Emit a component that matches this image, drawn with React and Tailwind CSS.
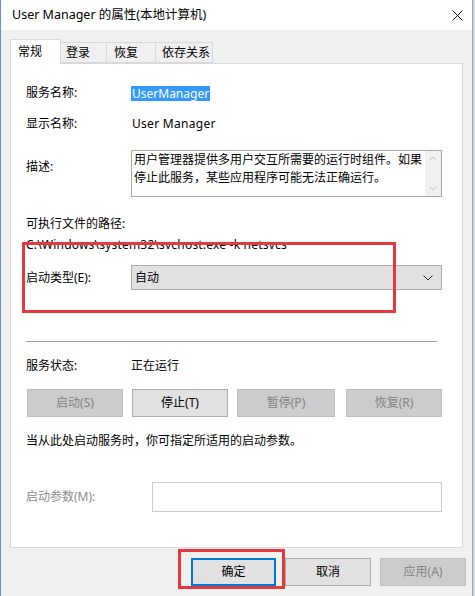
import React from "react";

const font = { fontFamily: '"Noto Sans", "Noto Sans CJK SC", sans-serif' };

function Btn({ children, disabled, primary, className = "" }) {
  return (
    <div
      className={
        "flex h-[28px] items-center justify-center text-[12px] " +
        (primary
          ? "border-2 border-[#0078d7] bg-[#e1e1e1] text-black "
          : disabled
          ? "border border-[#bfbfbf] bg-[#cccccc] text-[#838383] "
          : "border border-[#adadad] bg-[#e1e1e1] text-black ") +
        className
      }
    >
      {children}
    </div>
  );
}

function Row({ label, children, className = "" }) {
  return (
    <div className={"flex items-center " + className}>
      <div className="w-[105px] shrink-0">{label}</div>
      {children}
    </div>
  );
}

export default function App() {
  return (
    <div
      className="relative flex h-[596px] w-[475px] overflow-hidden bg-[#c8d5e2] text-[12px] text-black"
      style={font}
    >
      <div className="flex h-full w-[473px] flex-col border-l border-r border-l-[#6a93bd] border-r-[#a9a9a9] bg-[#f0f0f0]">
        {/* title bar */}
        <div className="flex h-[30px] shrink-0 items-center justify-between bg-white pl-[11px] pr-[8px]">
          <span className="text-[12.5px]">User Manager 的属性(本地计算机)</span>
          <svg width="11" height="11" viewBox="0 0 11 11" className="mr-[1px]">
            <path d="M0.5 0.5L10.5 10.5M10.5 0.5L0.5 10.5" stroke="#111" strokeWidth="1" />
          </svg>
        </div>

        <div className="flex flex-1 flex-col px-[9px]">
          {/* tabs */}
          <div className="mt-[9px] flex h-[24px] items-end">
            <div className="relative z-10 -mb-px flex h-[25px] w-[51px] items-center border border-b-0 border-[#d9d9d9] bg-white pl-[7px]">
              常规
            </div>
            <div className="flex h-[21px] w-[46px] items-center border-y border-r border-[#d9d9d9] bg-[#f0f0f0] pl-[5px]">
              登录
            </div>
            <div className="flex h-[21px] w-[49px] items-center border-y border-r border-[#d9d9d9] bg-[#f0f0f0] pl-[7px]">
              恢复
            </div>
            <div className="flex h-[21px] w-[57px] items-center border-y border-r border-[#d9d9d9] bg-[#f0f0f0] pl-[6px]">
              依存关系
            </div>
          </div>

          {/* panel */}
          <div className="flex h-[485px] flex-col border border-[#d9d9d9] bg-white pl-[15px] pr-[20px]">
            <Row label="服务名称:" className="mt-[19px] h-[20px]">
              <span className="bg-[#3399ff] px-[1px] leading-[15px] text-white">UserManager</span>
            </Row>
            <Row label="显示名称:" className="mt-[11px] h-[20px]">
              <span className="pl-[1px] tracking-[0.3px]">User Manager</span>
            </Row>

            <div className="mt-[16px] flex">
              <div className="w-[105px] shrink-0 pt-[8px]">描述:</div>
              <div className="flex h-[47px] flex-1 border border-[#a9a9a9]">
                <div className="flex-1 pl-[2px] leading-[18px]">
                  用户管理器提供多用户交互所需要的运行时组件。如果停止此服务，某些应用程序可能无法正确运行。
                </div>
                <div className="flex w-[16px] flex-col items-center justify-between bg-[#f0f0f0] py-[5px]">
                  <svg width="8" height="5" viewBox="0 0 8 5">
                    <path d="M0.5 4.5L4 1L7.5 4.5" fill="none" stroke="#c2c2c2" />
                  </svg>
                  <svg width="8" height="5" viewBox="0 0 8 5">
                    <path d="M0.5 0.5L4 4L7.5 0.5" fill="none" stroke="#c2c2c2" />
                  </svg>
                </div>
              </div>
            </div>

            <div className="mt-[17px] flex h-[20px] items-center">可执行文件的路径:</div>
            <div className="mt-px flex h-[20px] items-center tracking-[0.2px]">
              {"C:\\Windows\\system32\\svchost.exe  -k netsvcs"}
            </div>

            <Row label="启动类型(E):" className="mt-[10px]">
              <div className="flex h-[25px] flex-1 items-center justify-between border border-[#adadad] bg-[#e1e1e1] pl-[3px] pr-[8px]">
                <span>自动</span>
                <svg width="10" height="6" viewBox="0 0 10 6">
                  <path d="M0.5 0.5L5 5L9.5 0.5" fill="none" stroke="#333" />
                </svg>
              </div>
            </Row>

            <div className="mt-[51px] mr-[5px] h-px bg-[#a0a0a0]" />

            <Row label="服务状态:" className="mt-[14px] h-[20px]">
              <span>正在运行</span>
            </Row>

            <div className="mt-[13px] flex gap-[9px] pl-[1px]">
              <Btn disabled className="w-[96px]">启动(S)</Btn>
              <Btn className="w-[96px]">停止(T)</Btn>
              <Btn disabled className="w-[98px]">暂停(P)</Btn>
              <Btn disabled className="ml-[2px] w-[96px]">恢复(R)</Btn>
            </div>

            <div className="mt-[14px] flex h-[20px] items-center">
              当从此处启动服务时，你可指定所适用的启动参数。
            </div>

            <div className="mt-[31px] flex items-center">
              <div className="w-[126px] shrink-0 text-[#8c8c8c]">启动参数(M):</div>
              <div className="h-[30px] flex-1 border border-[#cccccc] bg-white" />
            </div>
          </div>

          {/* bottom buttons */}
          <div className="mt-[10px] -mr-[3px] flex justify-end gap-[9px]">
            <Btn primary className="w-[85px]">确定</Btn>
            <Btn className="w-[86px]">取消</Btn>
            <Btn disabled className="w-[86px]">应用(A)</Btn>
          </div>
        </div>
      </div>

      {/* red annotation boxes */}
      <div className="pointer-events-none absolute left-[22px] top-[242px] h-[71px] w-[374px] border-[3px] border-[#e5393f]" />
      <div className="pointer-events-none absolute left-[178px] top-[549px] h-[40px] w-[107px] border-[3px] border-[#e5393f]" />
    </div>
  );
}
